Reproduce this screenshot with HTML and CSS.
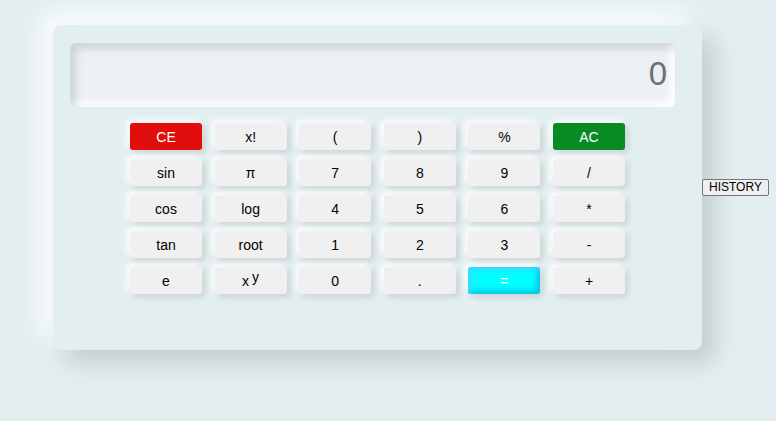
FILE: index.html
```html
<!DOCTYPE html>
<html>
<head>
<meta charset="utf-8">
<link rel="stylesheet" href="styles.css">
</head>
<body>
<div class="page">
<div class="calc">
  <div class="display">0</div>
  <div class="keys">
    <button class="key key-red">CE</button>
    <button class="key">x!</button>
    <button class="key">(</button>
    <button class="key">)</button>
    <button class="key">%</button>
    <button class="key key-green">AC</button>
    <button class="key">sin</button>
    <button class="key">π</button>
    <button class="key">7</button>
    <button class="key">8</button>
    <button class="key">9</button>
    <button class="key">/</button>
    <button class="key">cos</button>
    <button class="key">log</button>
    <button class="key">4</button>
    <button class="key">5</button>
    <button class="key">6</button>
    <button class="key">*</button>
    <button class="key">tan</button>
    <button class="key">root</button>
    <button class="key">1</button>
    <button class="key">2</button>
    <button class="key">3</button>
    <button class="key">-</button>
    <button class="key">e</button>
    <button class="key">x<sup class="exp">y</sup></button>
    <button class="key">0</button>
    <button class="key">.</button>
    <button class="key key-eq">=</button>
    <button class="key">+</button>
  </div>
</div>
<button class="history">HISTORY</button>
</div>
</body>
</html>
```
FILE: styles.css
```css
html, body {
  margin: 0;
  padding: 0;
  background: #e3eef0;
}
body {
  font-family: "Liberation Sans", Arial, sans-serif;
  min-height: 421px;
}
.page {
  display: flex;
  align-items: center;
  padding: 25px 0 0 53px;
}
.calc {
  box-sizing: border-box;
  width: 649px;
  height: 325px;
  flex: none;
  background: #e3eef0;
  border-radius: 8px;
  padding: 18px 27px 0 17px;
  box-shadow: 12px 12px 24px rgba(0, 0, 0, 0.15), -12px -12px 24px rgba(255, 255, 255, 0.9);
}
.display {
  box-sizing: border-box;
  width: 605px;
  height: 64px;
  background: #ebf0f2;
  border-radius: 6px;
  box-shadow: inset 5px 5px 8px rgba(0, 0, 0, 0.13), inset -5px -5px 8px #ffffff;
  color: #6b7176;
  font-size: 33px;
  text-align: right;
  padding: 13px 8px 0 0;
  line-height: 36px;
}
.keys {
  width: 495px;
  margin: 16px 0 0 60px;
  display: grid;
  grid-template-columns: repeat(6, 72px);
  justify-content: space-between;
  row-gap: 9px;
}
.key {
  height: 27px;
  border: none;
  border-radius: 3px;
  background: #f0f0f0;
  font-family: "Liberation Sans", Arial, sans-serif;
  font-size: 14px;
  color: #000;
  padding: 0;
  box-shadow: 3px 3px 6px rgba(0, 0, 0, 0.12), -3px -3px 6px #ffffff;
}
.key-red {
  background: #e10e0e;
  color: #fff;
}
.key-green {
  background: #078b22;
  color: #fff;
}
.key-eq {
  background: #00ffff;
  color: #fff;
  box-shadow: inset 3px 3px 6px #3cd8ff, inset -3px -3px 6px #00bde6, 3px 3px 6px rgba(0, 0, 0, 0.12), -3px -3px 6px #ffffff;
}
.exp {
  font-size: 14px;
  position: relative;
  top: -4px;
  vertical-align: baseline;
  margin-left: 3px;
}
.history {
  flex: none;
  font-family: "Liberation Sans", Arial, sans-serif;
  font-size: 12px;
  padding: 1px 6px;
  border: 1px solid #767676;
  border-radius: 2px;
  background: #efefef;
  color: #000;
  line-height: 13px;
  margin: 0;
}
```
